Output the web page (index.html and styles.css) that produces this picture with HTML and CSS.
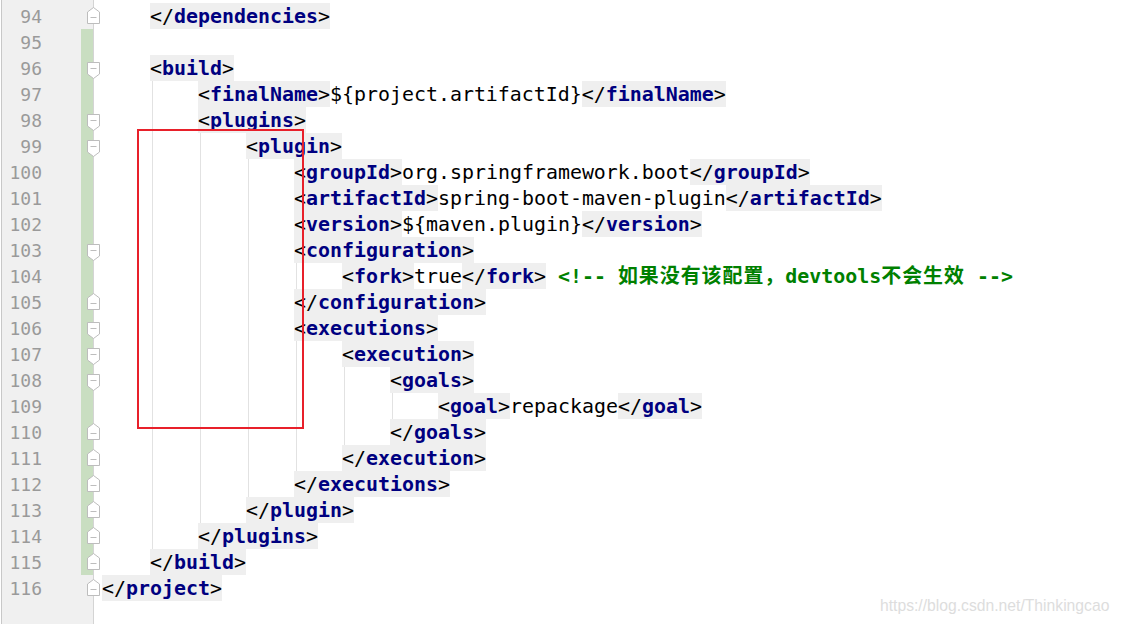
FILE: index.html
```html
<!DOCTYPE html>
<html lang="zh">
<head>
<meta charset="utf-8">
<title>pom.xml</title>
<link rel="stylesheet" href="styles.css">
</head>
<body>
<div class="editor">
  <div class="row top"><div class="gut"></div><div class="code"></div></div>

  <div class="row"><div class="gut"><span class="num">94</span><svg class="fold close" viewBox="0 0 13 17"><path d="M0.5 16.5V5L6.5 0.5L12.5 5V16.5Z"/><path d="M3.5 10.5H9.5"/></svg></div>
    <div class="code"><span class="i"></span><span class="t">&lt;/<span class="n">dependencies</span>&gt;</span></div></div>

  <div class="row"><div class="gut chg"><span class="num">95</span></div><div class="code"></div></div>

  <div class="row"><div class="gut chg"><span class="num">96</span><svg class="fold open" viewBox="0 0 13 17"><path d="M0.5 0.5H12.5V12L6.5 16.5L0.5 12Z"/><path d="M3.5 6.5H9.5"/></svg></div>
    <div class="code"><span class="i"></span><span class="t">&lt;<span class="n">build</span>&gt;</span></div></div>

  <div class="row"><div class="gut chg"><span class="num">97</span></div>
    <div class="code"><span class="i"></span><span class="i g"></span><span class="t">&lt;<span class="n">finalName</span>&gt;</span><span class="x">${project.artifactId}</span><span class="t">&lt;/<span class="n">finalName</span>&gt;</span></div></div>

  <div class="row"><div class="gut chg"><span class="num">98</span><svg class="fold open" viewBox="0 0 13 17"><path d="M0.5 0.5H12.5V12L6.5 16.5L0.5 12Z"/><path d="M3.5 6.5H9.5"/></svg></div>
    <div class="code"><span class="i"></span><span class="i g"></span><span class="t">&lt;<span class="n">plugins</span>&gt;</span></div></div>

  <div class="row"><div class="gut chg"><span class="num">99</span><svg class="fold open" viewBox="0 0 13 17"><path d="M0.5 0.5H12.5V12L6.5 16.5L0.5 12Z"/><path d="M3.5 6.5H9.5"/></svg></div>
    <div class="code"><span class="i"></span><span class="i g"></span><span class="i g"></span><span class="t">&lt;<span class="n">plugin</span>&gt;</span></div></div>

  <div class="row"><div class="gut chg"><span class="num">100</span></div>
    <div class="code"><span class="i"></span><span class="i g"></span><span class="i g"></span><span class="i g"></span><span class="t">&lt;<span class="n">groupId</span>&gt;</span><span class="x">org.springframework.boot</span><span class="t">&lt;/<span class="n">groupId</span>&gt;</span></div></div>

  <div class="row"><div class="gut chg"><span class="num">101</span></div>
    <div class="code"><span class="i"></span><span class="i g"></span><span class="i g"></span><span class="i g"></span><span class="t">&lt;<span class="n">artifactId</span>&gt;</span><span class="x">spring-boot-maven-plugin</span><span class="t">&lt;/<span class="n">artifactId</span>&gt;</span></div></div>

  <div class="row"><div class="gut chg"><span class="num">102</span></div>
    <div class="code"><span class="i"></span><span class="i g"></span><span class="i g"></span><span class="i g"></span><span class="t">&lt;<span class="n">version</span>&gt;</span><span class="x">${maven.plugin}</span><span class="t">&lt;/<span class="n">version</span>&gt;</span></div></div>

  <div class="row"><div class="gut chg"><span class="num">103</span><svg class="fold open" viewBox="0 0 13 17"><path d="M0.5 0.5H12.5V12L6.5 16.5L0.5 12Z"/><path d="M3.5 6.5H9.5"/></svg></div>
    <div class="code"><span class="i"></span><span class="i g"></span><span class="i g"></span><span class="i g"></span><span class="t">&lt;<span class="n">configuration</span>&gt;</span></div></div>

  <div class="row"><div class="gut chg"><span class="num">104</span></div>
    <div class="code"><span class="i"></span><span class="i g"></span><span class="i g"></span><span class="i g"></span><span class="i g"></span><span class="t">&lt;<span class="n">fork</span>&gt;</span><span class="x">true</span><span class="t">&lt;/<span class="n">fork</span>&gt;</span><span class="c"> &lt;!-- <span class="cjk">如果没有该配置，</span>devtools<span class="cjk">不会生效</span> --&gt;</span></div></div>

  <div class="row"><div class="gut chg"><span class="num">105</span><svg class="fold close" viewBox="0 0 13 17"><path d="M0.5 16.5V5L6.5 0.5L12.5 5V16.5Z"/><path d="M3.5 10.5H9.5"/></svg></div>
    <div class="code"><span class="i"></span><span class="i g"></span><span class="i g"></span><span class="i g"></span><span class="t">&lt;/<span class="n">configuration</span>&gt;</span></div></div>

  <div class="row"><div class="gut chg"><span class="num">106</span><svg class="fold open" viewBox="0 0 13 17"><path d="M0.5 0.5H12.5V12L6.5 16.5L0.5 12Z"/><path d="M3.5 6.5H9.5"/></svg></div>
    <div class="code"><span class="i"></span><span class="i g"></span><span class="i g"></span><span class="i g"></span><span class="t">&lt;<span class="n">executions</span>&gt;</span></div></div>

  <div class="row"><div class="gut chg"><span class="num">107</span><svg class="fold open" viewBox="0 0 13 17"><path d="M0.5 0.5H12.5V12L6.5 16.5L0.5 12Z"/><path d="M3.5 6.5H9.5"/></svg></div>
    <div class="code"><span class="i"></span><span class="i g"></span><span class="i g"></span><span class="i g"></span><span class="i g"></span><span class="t">&lt;<span class="n">execution</span>&gt;</span></div></div>

  <div class="row"><div class="gut chg"><span class="num">108</span><svg class="fold open" viewBox="0 0 13 17"><path d="M0.5 0.5H12.5V12L6.5 16.5L0.5 12Z"/><path d="M3.5 6.5H9.5"/></svg></div>
    <div class="code"><span class="i"></span><span class="i g"></span><span class="i g"></span><span class="i g"></span><span class="i g"></span><span class="i g"></span><span class="t">&lt;<span class="n">goals</span>&gt;</span></div></div>

  <div class="row"><div class="gut chg"><span class="num">109</span></div>
    <div class="code"><span class="i"></span><span class="i g"></span><span class="i g"></span><span class="i g"></span><span class="i g"></span><span class="i g"></span><span class="i g"></span><span class="t">&lt;<span class="n">goal</span>&gt;</span><span class="x">repackage</span><span class="t">&lt;/<span class="n">goal</span>&gt;</span></div></div>

  <div class="row"><div class="gut chg"><span class="num">110</span><svg class="fold close" viewBox="0 0 13 17"><path d="M0.5 16.5V5L6.5 0.5L12.5 5V16.5Z"/><path d="M3.5 10.5H9.5"/></svg></div>
    <div class="code"><span class="i"></span><span class="i g"></span><span class="i g"></span><span class="i g"></span><span class="i g"></span><span class="i g"></span><span class="t">&lt;/<span class="n">goals</span>&gt;</span></div></div>

  <div class="row"><div class="gut chg"><span class="num">111</span><svg class="fold close" viewBox="0 0 13 17"><path d="M0.5 16.5V5L6.5 0.5L12.5 5V16.5Z"/><path d="M3.5 10.5H9.5"/></svg></div>
    <div class="code"><span class="i"></span><span class="i g"></span><span class="i g"></span><span class="i g"></span><span class="i g"></span><span class="t">&lt;/<span class="n">execution</span>&gt;</span></div></div>

  <div class="row"><div class="gut chg"><span class="num">112</span><svg class="fold close" viewBox="0 0 13 17"><path d="M0.5 16.5V5L6.5 0.5L12.5 5V16.5Z"/><path d="M3.5 10.5H9.5"/></svg></div>
    <div class="code"><span class="i"></span><span class="i g"></span><span class="i g"></span><span class="i g"></span><span class="t">&lt;/<span class="n">executions</span>&gt;</span></div></div>

  <div class="row"><div class="gut chg"><span class="num">113</span><svg class="fold close" viewBox="0 0 13 17"><path d="M0.5 16.5V5L6.5 0.5L12.5 5V16.5Z"/><path d="M3.5 10.5H9.5"/></svg></div>
    <div class="code"><span class="i"></span><span class="i g"></span><span class="i g"></span><span class="t">&lt;/<span class="n">plugin</span>&gt;</span></div></div>

  <div class="row"><div class="gut chg"><span class="num">114</span><svg class="fold close" viewBox="0 0 13 17"><path d="M0.5 16.5V5L6.5 0.5L12.5 5V16.5Z"/><path d="M3.5 10.5H9.5"/></svg></div>
    <div class="code"><span class="i"></span><span class="i g"></span><span class="t">&lt;/<span class="n">plugins</span>&gt;</span></div></div>

  <div class="row"><div class="gut chg"><span class="num">115</span><svg class="fold close" viewBox="0 0 13 17"><path d="M0.5 16.5V5L6.5 0.5L12.5 5V16.5Z"/><path d="M3.5 10.5H9.5"/></svg></div>
    <div class="code"><span class="i"></span><span class="t">&lt;/<span class="n">build</span>&gt;</span></div></div>

  <div class="row"><div class="gut"><span class="num">116</span><svg class="fold close" viewBox="0 0 13 17"><path d="M0.5 16.5V5L6.5 0.5L12.5 5V16.5Z"/><path d="M3.5 10.5H9.5"/></svg></div>
    <div class="code"><span class="t">&lt;/<span class="n">project</span>&gt;</span></div></div>

  <div class="row fill"><div class="gut"></div><div class="code"></div></div>

  <div class="mark"></div>
  <div class="wm">https://blog.csdn.net/Thinkingcao</div>
</div>
</body>
</html>
```

FILE: styles.css
```css
html, body {
  margin: 0;
  padding: 0;
  background: #ffffff;
  height: 624px;
  overflow: hidden;
}

.editor {
  position: relative;
  display: flex;
  flex-direction: column;
  height: 624px;
  font-family: "DejaVu Sans Mono", "Noto Sans CJK SC", monospace;
}

.row {
  display: flex;
  flex: none;
  height: 26px;
}

.row.top {
  height: 3px;
}

.row.fill {
  flex: 1;
  height: auto;
}

.gut {
  position: relative;
  flex: none;
  width: 93px;
  margin-left: 1px;
  box-sizing: border-box;
  border-left: 1px solid #c8c8c8;
  border-right: 1px solid #d4d4d4;
  background: #f0f0f0;
}

.gut.chg {
  background: linear-gradient(to right, #f0f0f0 79px, #c9dec1 79px);
}

.num {
  display: block;
  width: 40px;
  padding-top: 1px;
  text-align: right;
  font-size: 18px;
  line-height: 26px;
  color: #9a9a9a;
}

.fold {
  position: absolute;
  left: 85px;
  width: 13px;
  height: 17px;
  z-index: 2;
  fill: #ffffff;
  stroke: #bdbdbd;
  stroke-width: 1;
}

.fold.open {
  top: 7px;
}

.fold.close {
  top: 4px;
}

.code {
  display: flex;
  flex: 1;
  padding-left: 8px;
  font-size: 19.93px;
  line-height: 25px;
  white-space: pre;
  color: #000000;
}

.code > span {
  padding-top: 1px;
}

.i {
  flex: none;
  width: 48px;
}

.g {
  background: linear-gradient(to right, transparent 2px, #e2e2e2 2px, #e2e2e2 3px, transparent 3px);
}

.t {
  background: #efefef;
}

.n {
  color: #000080;
  font-weight: bold;
}

.c {
  color: #008000;
  font-weight: bold;
}

.cjk {
  letter-spacing: 1px;
}

.mark {
  position: absolute;
  left: 137px;
  top: 129px;
  width: 167px;
  height: 300px;
  box-sizing: border-box;
  border: 2px solid #e8202a;
}

.wm {
  position: absolute;
  left: 880px;
  top: 597px;
  font-family: "Liberation Sans", Arial, sans-serif;
  font-size: 15.7px;
  color: #dddddd;
}
```
